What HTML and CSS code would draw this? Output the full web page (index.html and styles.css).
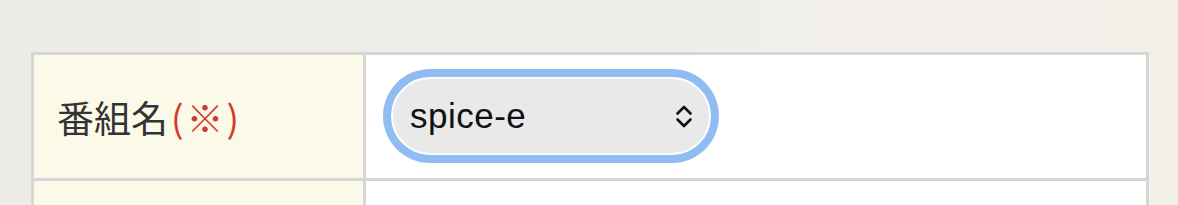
FILE: index.html
```html
<!DOCTYPE html>
<html lang="ja">
<head>
    <meta charset="UTF-8">
    <meta name="viewport" content="width=device-width, initial-scale=1.0">
    <title>番組名</title>
    <link rel="stylesheet" href="styles.css">
</head>
<body>

    <div class="page">
        <table class="form-table">
            <tr>
                <th>番組名<span class="required">(※)</span></th>
                <td>
                    <div class="select-wrap">
                        <select class="program-select">
                            <option>spice-e</option>
                        </select>
                        <svg class="chevrons" width="18" height="23" viewBox="0 0 18 23">
                            <path d="M2.5 8.5 L9 2 L15.5 8.5" fill="none" stroke="#111" stroke-width="2.6" stroke-linecap="round" stroke-linejoin="round"/>
                            <path d="M2.5 14.5 L9 21 L15.5 14.5" fill="none" stroke="#111" stroke-width="2.6" stroke-linecap="round" stroke-linejoin="round"/>
                        </svg>
                    </div>
                </td>
            </tr>
            <tr>
                <th></th>
                <td></td>
            </tr>
        </table>
    </div>

</body>
</html>
```

FILE: styles.css
```css
html, body {
    margin: 0;
    padding: 0;
}
body {
    font-family: "Noto Sans CJK JP", "Noto Sans", sans-serif;
    background: linear-gradient(90deg, #ecebe8, #f3f0ea);
    color: #333;
    height: 205px;
    overflow: hidden;
}
.page {
    padding: 52px 29px 0 31px;
}
.form-table {
    width: 1118px;
    border-collapse: separate;
    border-spacing: 0;
    border-left: 3px solid #d6d6d6;
    border-top: 3px solid #d6d6d6;
}
.form-table th,
.form-table td {
    height: 123px;
    padding: 0;
    border-right: 3px solid #d6d6d6;
    border-bottom: 3px solid #d6d6d6;
}
.form-table th {
    width: 306px;
    padding-left: 23px;
    background: #fbf9e8;
    text-align: left;
    font-weight: normal;
    font-size: 37px;
    color: #333;
    white-space: nowrap;
}
.form-table td {
    background: #fff;
    padding-left: 25px;
}
.required {
    color: #d23a2c;
    margin-left: 3px;
    letter-spacing: 3px;
}
.select-wrap {
    position: relative;
    width: 320px;
    height: 78px;
    margin-top: -2px;
}
.program-select {
    -webkit-appearance: none;
    appearance: none;
    box-sizing: border-box;
    width: 320px;
    height: 78px;
    padding: 0 40px 0 17px;
    border: 2px solid #fff;
    border-radius: 39px;
    background: #e9e9e9;
    box-shadow: 0 0 0 8px #8fbdf2;
    font-family: "Liberation Sans", Arial, sans-serif;
    font-size: 35px;
    letter-spacing: 0.5px;
    color: #111;
    outline: none;
}
.chevrons {
    position: absolute;
    right: 18px;
    top: 28px;
    pointer-events: none;
}
```
